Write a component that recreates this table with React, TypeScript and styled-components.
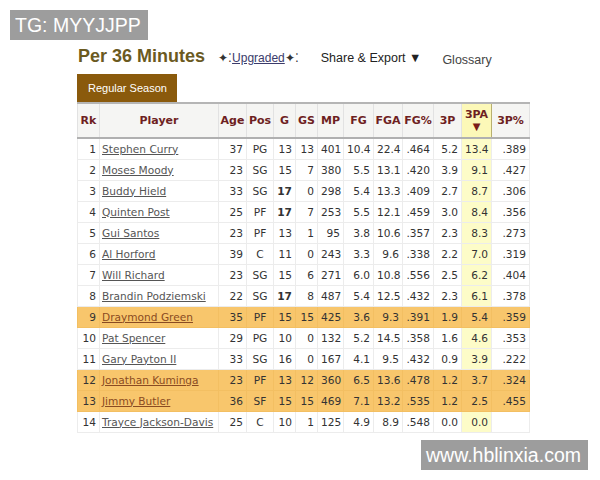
import styled, { createGlobalStyle } from 'styled-components';

const GlobalStyle = createGlobalStyle`
  body {
    margin: 0;
    background: #ffffff;
    font-family: "Liberation Sans", Arial, sans-serif;
  }
`;

const Page = styled.div`
  position: relative;
  width: 600px;
  height: 480px;
  overflow: hidden;
  background: #fff;
`;

const Watermark = styled.div<{ $top: number; $left: number }>`
  position: absolute;
  top: ${({ $top }) => $top}px;
  left: ${({ $left }) => $left}px;
  background: #9d9d9d;
  color: #fff;
  font-size: 19.5px;
  line-height: 30px;
  padding: 0 7px 0 5px;
`;

const Content = styled.div`
  padding: 46px 0 0 78px;
`;

const HeadBar = styled.div`
  display: flex;
  align-items: baseline;
  height: 28px;
`;

const Title = styled.h2`
  margin: 0;
  font-size: 18px;
  font-weight: bold;
  color: #6b5a1f;
`;

const Upgraded = styled.a`
  margin-left: 13px;
  font-size: 12px;
  color: #333;
  span {
    text-decoration: underline;
    color: #3b3b6b;
  }
`;

const MenuItem = styled.span<{ $gap: number; $muted?: boolean }>`
  margin-left: ${({ $gap }) => $gap}px;
  font-size: 12.5px;
  color: ${({ $muted }) => ($muted ? '#444' : '#222')};
  position: relative;
  top: ${({ $muted }) => ($muted ? 2 : 0)}px;
`;

const Tab = styled.div`
  margin-left: -1px;
  width: 100px;
  height: 28px;
  background: #8a5a0c;
  color: #fff;
  font-size: 11px;
  line-height: 28px;
  padding-left: 11px;
  box-sizing: border-box;
`;

const Table = styled.table`
  margin-left: -1px;
  border-collapse: collapse;
  font-family: "DejaVu Sans", Verdana, sans-serif;
  font-size: 10.6px;
  color: #333;
  border: 1px solid #c8c8c8;
  border-top: 2px solid #b5b5b5;
  table-layout: fixed;
  width: 453px;
`;

const Th = styled.th<{ $sorted?: boolean }>`
  height: 33px;
  padding: 0;
  font-weight: bold;
  font-size: 11px;
  color: #6e1f22;
  text-align: center;
  background: ${({ $sorted }) => ($sorted ? '#fcf8b8' : '#f5f5f3')};
  border: 1px solid ${({ $sorted }) => ($sorted ? '#b8b070' : '#e2e2e2')};
  border-bottom: 2px solid #b0b0b0;
  line-height: 13px;
`;

const SortArrow = styled.div`
  color: #7b1d1a;
  font-size: 10px;
  line-height: 12px;
`;

const Row = styled.tr<{ $hl?: boolean }>`
  height: 21px;
  background: ${({ $hl }) => ($hl ? '#f8c66c' : '#fff')};
`;

const Td = styled.td<{ $align?: string; $sorted?: boolean; $hl?: boolean; $bold?: boolean }>`
  padding: 0 ${({ $align }) => ($align === 'left' ? '0 0 2px' : '3px')};
  text-align: ${({ $align }) => $align || 'right'};
  border: 1px solid ${({ $hl }) => ($hl ? '#f3bf62' : '#ececec')};
  background: ${({ $sorted, $hl }) => ($hl ? 'transparent' : $sorted ? '#fdfcc8' : 'transparent')};
  font-weight: ${({ $bold }) => ($bold ? 'bold' : 'normal')};
  white-space: nowrap;
  overflow: hidden;
`;

const PlayerLink = styled.a<{ $hl?: boolean }>`
  color: ${({ $hl }) => ($hl ? '#8a4b22' : '#555')};
  text-decoration: underline;
`;

type P = [string, string, string, string, string, string, string, string, string, string, string, string, string];

const players: { d: P; hl?: boolean; boldG?: boolean }[] = [
  { d: ['1', 'Stephen Curry', '37', 'PG', '13', '13', '401', '10.4', '22.4', '.464', '5.2', '13.4', '.389'] },
  { d: ['2', 'Moses Moody', '23', 'SG', '15', '7', '380', '5.5', '13.1', '.420', '3.9', '9.1', '.427'] },
  { d: ['3', 'Buddy Hield', '33', 'SG', '17', '0', '298', '5.4', '13.3', '.409', '2.7', '8.7', '.306'], boldG: true },
  { d: ['4', 'Quinten Post', '25', 'PF', '17', '7', '253', '5.5', '12.1', '.459', '3.0', '8.4', '.356'], boldG: true },
  { d: ['5', 'Gui Santos', '23', 'PF', '13', '1', '95', '3.8', '10.6', '.357', '2.3', '8.3', '.273'] },
  { d: ['6', 'Al Horford', '39', 'C', '11', '0', '243', '3.3', '9.6', '.338', '2.2', '7.0', '.319'] },
  { d: ['7', 'Will Richard', '23', 'SG', '15', '6', '271', '6.0', '10.8', '.556', '2.5', '6.2', '.404'] },
  { d: ['8', 'Brandin Podziemski', '22', 'SG', '17', '8', '487', '5.4', '12.5', '.432', '2.3', '6.1', '.378'], boldG: true },
  { d: ['9', 'Draymond Green', '35', 'PF', '15', '15', '425', '3.6', '9.3', '.391', '1.9', '5.4', '.359'], hl: true },
  { d: ['10', 'Pat Spencer', '29', 'PG', '10', '0', '132', '5.2', '14.5', '.358', '1.6', '4.6', '.353'] },
  { d: ['11', 'Gary Payton II', '33', 'SG', '16', '0', '167', '4.1', '9.5', '.432', '0.9', '3.9', '.222'] },
  { d: ['12', 'Jonathan Kuminga', '23', 'PF', '13', '12', '360', '6.5', '13.6', '.478', '1.2', '3.7', '.324'], hl: true },
  { d: ['13', 'Jimmy Butler', '36', 'SF', '15', '15', '469', '7.1', '13.2', '.535', '1.2', '2.5', '.455'], hl: true },
  { d: ['14', 'Trayce Jackson-Davis', '25', 'C', '10', '1', '125', '4.9', '8.9', '.548', '0.0', '0.0', ''] },
];

const headers = ['Rk', 'Player', 'Age', 'Pos', 'G', 'GS', 'MP', 'FG', 'FGA', 'FG%', '3P', '3PA', '3P%'];
const widths = [22, 119, 28, 27, 22, 22, 26, 30, 29, 31, 28, 30, 38];
const SORTED = 11;

export default function App() {
  return (
    <Page>
      <GlobalStyle />
      <Watermark $top={10} $left={10}>TG: MYYJJPP</Watermark>
      <Content>
        <HeadBar>
          <Title>Per 36 Minutes</Title>
          <Upgraded>
            ✦⁚<span>Upgraded</span>✦⁚
          </Upgraded>
          <MenuItem $gap={22}>Share &amp; Export ▼</MenuItem>
          <MenuItem $gap={21} $muted>
            Glossary
          </MenuItem>
        </HeadBar>
        <Tab>Regular Season</Tab>
        <Table>
          <colgroup>
            {widths.map((w, i) => (
              <col key={i} style={{ width: w }} />
            ))}
          </colgroup>
          <thead>
            <tr>
              {headers.map((h, i) => (
                <Th key={h} $sorted={i === SORTED}>
                  {h}
                  {i === SORTED && <SortArrow>▼</SortArrow>}
                </Th>
              ))}
            </tr>
          </thead>
          <tbody>
            {players.map(({ d, hl, boldG }) => (
              <Row key={d[0]} $hl={hl}>
                {d.map((v, i) => (
                  <Td
                    key={i}
                    $hl={hl}
                    $sorted={i === SORTED}
                    $bold={boldG && i === 4}
                    $align={i === 1 ? 'left' : i === 3 ? 'center' : 'right'}
                  >
                    {i === 1 ? <PlayerLink $hl={hl}>{v}</PlayerLink> : v}
                  </Td>
                ))}
              </Row>
            ))}
          </tbody>
        </Table>
      </Content>
      <Watermark $top={440} $left={421}>www.hblinxia.com</Watermark>
    </Page>
  );
}
